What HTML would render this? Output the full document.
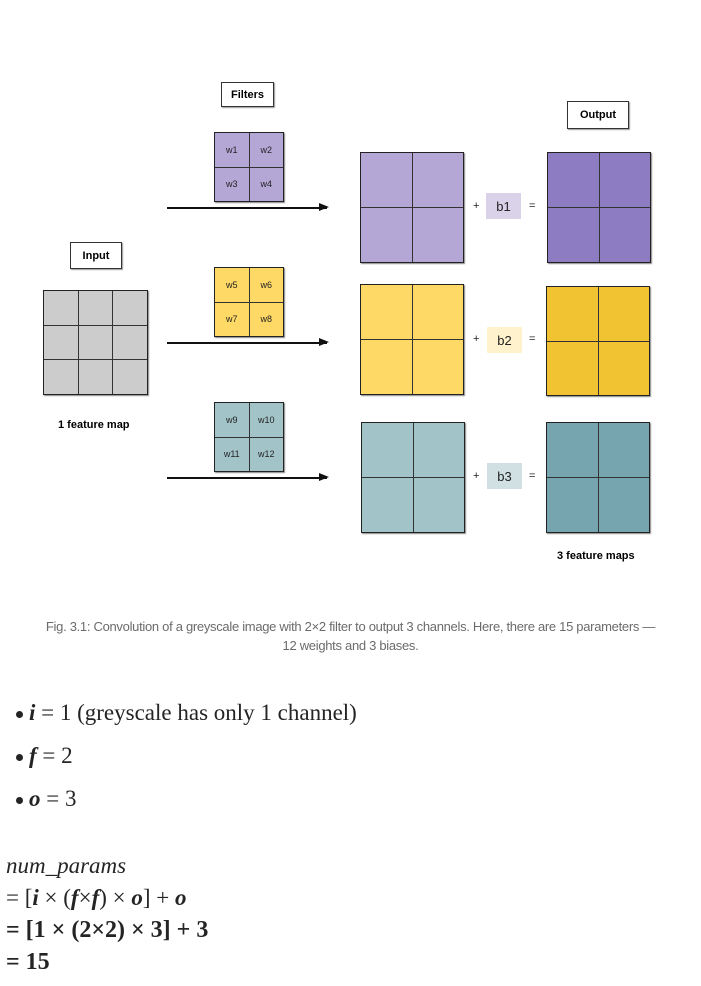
<!DOCTYPE html>
<html><head><meta charset="utf-8"><style>
body{margin:0;width:701px;height:986px;background:#fff;position:relative;overflow:hidden;font-family:"Liberation Sans",Arial,sans-serif}
.lbl{position:absolute;border:1px solid #333;background:#fff;font-weight:bold;font-size:11px;display:flex;align-items:center;justify-content:center;box-shadow:1px 1px 1px #999}
.g{position:absolute;display:grid;border:1px solid #222;box-sizing:border-box;box-shadow:1px 1px 1px #888;gap:1px;background:#333}
.g div{display:flex;align-items:center;justify-content:center;font-size:9px;color:#222}
.g2{grid-template-columns:1fr 1fr;grid-template-rows:1fr 1fr}
.g3{grid-template-columns:1fr 1fr 1fr;grid-template-rows:1fr 1fr 1fr}
.arr{position:absolute;height:1.5px;background:#111}
.arr:after{content:"";position:absolute;right:-2px;top:-4px;border-left:10px solid #111;border-top:4.5px solid transparent;border-bottom:4.5px solid transparent}
.b{position:absolute;width:35px;height:26px;font-size:13px;display:flex;align-items:center;justify-content:center;color:#222}
.op{position:absolute;font-size:11px;color:#222}
.fm{position:absolute;font-size:11px;font-weight:bold}
.cap{position:absolute;left:0;width:701px;text-align:center;font-size:13px;color:#6b6b6b;line-height:19px;letter-spacing:-0.3px}
.s{position:absolute;font-family:"Liberation Serif",serif;font-size:22px;color:#242424;white-space:nowrap}
.dot{display:inline-block;width:7px;height:7px;border-radius:50%;background:#242424;vertical-align:middle;margin:0 6px 0 4px}
</style></head><body>
<div class="lbl" style="left:221px;top:82px;width:51px;height:23px">Filters</div>
<div class="lbl" style="left:567px;top:101px;width:60px;height:26px">Output</div>
<div class="lbl" style="left:70px;top:242px;width:50px;height:25px">Input</div>

<div class="g g3" style="left:43px;top:290px;width:105px;height:105px"><div style="background:#ccc"></div><div style="background:#ccc"></div><div style="background:#ccc"></div><div style="background:#ccc"></div><div style="background:#ccc"></div><div style="background:#ccc"></div><div style="background:#ccc"></div><div style="background:#ccc"></div><div style="background:#ccc"></div></div>
<div class="fm" style="left:58px;top:419px">1 feature map</div>

<div class="g g2" style="left:214px;top:132px;width:70px;height:70px;--c:#b4a7d6"><div style="background:#b4a7d6">w1</div><div style="background:#b4a7d6">w2</div><div style="background:#b4a7d6">w3</div><div style="background:#b4a7d6">w4</div></div>
<div class="g g2" style="left:214px;top:267px;width:70px;height:70px"><div style="background:#ffd966">w5</div><div style="background:#ffd966">w6</div><div style="background:#ffd966">w7</div><div style="background:#ffd966">w8</div></div>
<div class="g g2" style="left:214px;top:402px;width:70px;height:70px"><div style="background:#a2c4c9">w9</div><div style="background:#a2c4c9">w10</div><div style="background:#a2c4c9">w11</div><div style="background:#a2c4c9">w12</div></div>

<div class="arr" style="left:167px;top:207px;width:160px"></div>
<div class="arr" style="left:167px;top:342px;width:160px"></div>
<div class="arr" style="left:167px;top:477px;width:160px"></div>

<div class="g g2" style="left:360px;top:152px;width:104px;height:111px"><div style="background:#b4a7d6"></div><div style="background:#b4a7d6"></div><div style="background:#b4a7d6"></div><div style="background:#b4a7d6"></div></div>
<div class="g g2" style="left:360px;top:284px;width:104px;height:111px"><div style="background:#ffd966"></div><div style="background:#ffd966"></div><div style="background:#ffd966"></div><div style="background:#ffd966"></div></div>
<div class="g g2" style="left:361px;top:422px;width:104px;height:111px"><div style="background:#a2c4c9"></div><div style="background:#a2c4c9"></div><div style="background:#a2c4c9"></div><div style="background:#a2c4c9"></div></div>

<div class="g g2" style="left:547px;top:152px;width:104px;height:111px"><div style="background:#8e7cc3"></div><div style="background:#8e7cc3"></div><div style="background:#8e7cc3"></div><div style="background:#8e7cc3"></div></div>
<div class="g g2" style="left:546px;top:286px;width:104px;height:110px"><div style="background:#f1c232"></div><div style="background:#f1c232"></div><div style="background:#f1c232"></div><div style="background:#f1c232"></div></div>
<div class="g g2" style="left:546px;top:422px;width:104px;height:111px"><div style="background:#76a5af"></div><div style="background:#76a5af"></div><div style="background:#76a5af"></div><div style="background:#76a5af"></div></div>

<div class="op" style="left:473px;top:200px">+</div><div class="b" style="left:486px;top:193px;background:#d9d2e9">b1</div><div class="op" style="left:529px;top:200px">=</div>
<div class="op" style="left:473px;top:333px">+</div><div class="b" style="left:487px;top:327px;background:#fff2cc">b2</div><div class="op" style="left:529px;top:333px">=</div>
<div class="op" style="left:473px;top:470px">+</div><div class="b" style="left:487px;top:463px;background:#d0e0e3">b3</div><div class="op" style="left:529px;top:470px">=</div>

<div class="fm" style="left:557px;top:550px">3 feature maps</div>

<div class="cap" style="top:617px">Fig. 3.1: Convolution of a greyscale image with 2×2 filter to output 3 channels. Here, there are 15 parameters —<br>12 weights and 3 biases.</div>

<div class="s" style="left:12px;top:700px;font-size:23px"><span class="dot"></span><i><b>i</b></i> = 1 (greyscale has only 1 channel)</div>
<div class="s" style="left:12px;top:743px;font-size:23px"><span class="dot"></span><i><b>f</b></i> = 2</div>
<div class="s" style="left:12px;top:786px;font-size:23px"><span class="dot"></span><i><b>o</b></i> = 3</div>

<div class="s" style="left:6px;top:853px;font-size:23px"><i>num_params</i></div>
<div class="s" style="left:6px;top:885px;font-size:23px">= [<i><b>i</b></i> × (<i><b>f</b></i>×<i><b>f</b></i>) × <i><b>o</b></i>] + <i><b>o</b></i></div>
<div class="s" style="left:6px;top:917px;font-size:24px"><b>= [1 × (2×2) × 3] + 3</b></div>
<div class="s" style="left:6px;top:949px;font-size:24px"><b>= 15</b></div>
</body></html>
